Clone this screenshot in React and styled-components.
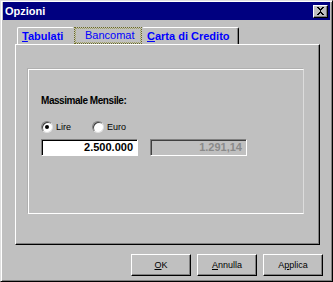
import React from "react";
import styled, { createGlobalStyle } from "styled-components";

const Global = createGlobalStyle`
  html, body { margin: 0; padding: 0; background: #c0c0c0; }
  body { font-family: "Liberation Sans", Arial, sans-serif; }
  * { box-sizing: border-box; }
`;

const Window = styled.div`
  width: 333px;
  height: 282px;
  background: #c0c0c0;
  border-top: 1px solid #dfdfdf;
  border-left: 1px solid #dfdfdf;
  border-right: 1px solid #000;
  border-bottom: 1px solid #000;
  box-shadow: inset 1px 1px 0 #fff, inset -1px -1px 0 #808080;
  padding: 1px 2px 2px 1px;
  display: flex;
  flex-direction: column;
  font-family: "Liberation Sans", Arial, sans-serif;
`;

const TitleBar = styled.div`
  height: 18px;
  margin-left: 1px;
  background: #000080;
  display: flex;
  align-items: center;
  justify-content: space-between;
  padding: 0 2px 0 2px;
`;

const Title = styled.span`
  color: #fff;
  font-weight: bold;
  font-size: 11px;
  line-height: 18px;
`;

const CloseButton = styled.div`
  width: 15px;
  height: 13px;
  background: #c0c0c0;
  border-top: 1px solid #fff;
  border-left: 1px solid #fff;
  border-right: 1px solid #000;
  border-bottom: 1px solid #000;
  box-shadow: inset -1px -1px 0 #808080;
  display: flex;
  align-items: center;
  justify-content: center;
`;

const Body = styled.div`
  flex: 1;
  display: flex;
  flex-direction: column;
  padding: 7px 0 0 13px;
`;

const TabRow = styled.div`
  display: flex;
  height: 17px;
  margin-left: 2px;
  align-items: flex-end;
`;

const Tab = styled.div`
  height: 17px;
  width: ${(p) => p.w}px;
  border-top: 1px solid #fff;
  border-left: 1px solid ${(p) => (p.noLeft ? "#c0c0c0" : "#fff")};
  border-right: 1px solid ${(p) => (p.dark ? "#000" : "#c0c0c0")};
  box-shadow: ${(p) => (p.dark ? "inset -1px 0 0 #808080" : "none")};
  border-radius: 2px 2px 0 0;
  color: #0000ff;
  font-size: 11px;
  font-weight: bold;
  line-height: 17px;
  padding-left: 4px;
  white-space: nowrap;
`;

const FocusTab = styled.div`
  height: 17px;
  width: 68px;
  border: 1px dotted #6a6a20;
  outline: 1px dotted #a0a060;
  outline-offset: -2px;
  background: #c0c0c0;
  color: #0000ff;
  font-size: 11px;
  line-height: 14px;
  padding-left: 10px;
  white-space: nowrap;
`;

const U = styled.span`
  text-decoration: underline;
`;

const Panel = styled.div`
  width: 305px;
  height: 201px;
  border-top: 1px solid #fff;
  border-left: 1px solid #fff;
  border-right: 1px solid #000;
  border-bottom: 1px solid #000;
  box-shadow: inset -1px -1px 0 #808080;
  padding: 24px 0 0 12px;
`;

const Group = styled.div`
  width: 276px;
  height: 145px;
  border: 1px solid #fff;
  border-right-color: #dcdcdc;
  box-shadow: -1px -1px 0 #b0b0b0;
  padding: 25px 0 0 12px;
  display: flex;
  flex-direction: column;
`;

const Label = styled.div`
  font-size: 10px;
  font-weight: bold;
  letter-spacing: -0.45px;
  line-height: 12px;
  color: #000;
`;

const RadioRow = styled.div`
  display: flex;
  align-items: center;
  margin-top: 14px;
  height: 12px;
`;

const RadioItem = styled.label`
  display: flex;
  align-items: center;
  font-size: 9px;
  color: #000;
  margin-right: ${(p) => p.mr || 0}px;
`;

const RadioCircle = styled.span`
  width: 12px;
  height: 12px;
  border-radius: 50%;
  background: #fff;
  border: 1px solid;
  border-color: #808080 #e0e0e0 #e0e0e0 #808080;
  box-shadow: inset 1px 1px 0 #404040;
  display: flex;
  align-items: center;
  justify-content: center;
  margin-right: 3px;
  &::after {
    content: "";
    width: 4px;
    height: 4px;
    border-radius: 50%;
    background: ${(p) => (p.checked ? "#000" : "transparent")};
  }
`;

const InputRow = styled.div`
  display: flex;
  gap: 12px;
  margin-top: 6px;
`;

const Field = styled.div`
  width: 97px;
  height: 17px;
  background: ${(p) => (p.disabled ? "#c0c0c0" : "#fff")};
  border-top: 1px solid #808080;
  border-left: 1px solid #808080;
  border-right: 1px solid #fff;
  border-bottom: 1px solid #fff;
  box-shadow: ${(p) => (p.disabled ? "inset 1px 1px 0 #404040" : "inset 1px 1px 0 #000")};
  font-size: 11px;
  font-weight: bold;
  color: ${(p) => (p.disabled ? "#8a8a8a" : "#000")};
  text-align: right;
  line-height: 15px;
  padding-right: 4px;
`;

const ButtonRow = styled.div`
  display: flex;
  justify-content: flex-end;
  gap: 6px;
  padding-right: 7px;
  margin-top: 9px;
`;

const Button = styled.div`
  width: 60px;
  height: 22px;
  background: #c0c0c0;
  border-top: 1px solid #fff;
  border-left: 1px solid #fff;
  border-right: 1px solid #000;
  border-bottom: 1px solid #000;
  box-shadow: inset -1px -1px 0 #808080;
  font-size: 9px;
  color: #000;
  display: flex;
  align-items: center;
  justify-content: center;
`;

export default function App() {
  return (
    <>
      <Global />
      <Window>
        <TitleBar>
          <Title>Opzioni</Title>
          <CloseButton>
            <svg width="9" height="8" viewBox="0 0 9 8">
              <path d="M1 0h2v1h1v1h1V1h1V0h2v1H7v1H6v1H5v2h1v1h1v1h1v1H6V7H5V6H4v1H3v1H1V7h1V6h1V5h1V3H3V2H2V1H1z" fill="#000" />
            </svg>
          </CloseButton>
        </TitleBar>
        <Body>
          <TabRow>
            <Tab w={57}>
              <U>T</U>abulati
            </Tab>
            <FocusTab>Bancomat</FocusTab>
            <Tab w={97} dark noLeft>
              <U>C</U>arta di Credito
            </Tab>
          </TabRow>
          <Panel>
            <Group>
              <Label>Massimale Mensile:</Label>
              <RadioRow>
                <RadioItem mr={21}>
                  <RadioCircle checked />
                  Lire
                </RadioItem>
                <RadioItem>
                  <RadioCircle />
                  Euro
                </RadioItem>
              </RadioRow>
              <InputRow>
                <Field>2.500.000</Field>
                <Field disabled>1.291,14</Field>
              </InputRow>
            </Group>
          </Panel>
          <ButtonRow>
            <Button>
              <U>O</U>K
            </Button>
            <Button>
              <U>A</U>nnulla
            </Button>
            <Button>
              A<U>p</U>plica
            </Button>
          </ButtonRow>
        </Body>
      </Window>
    </>
  );
}
